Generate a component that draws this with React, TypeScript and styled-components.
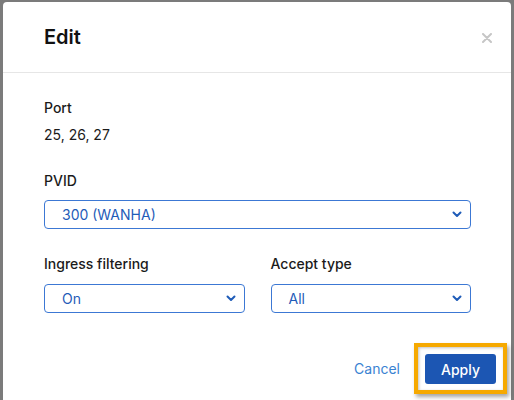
import styled, { createGlobalStyle } from "styled-components";

const GlobalStyle = createGlobalStyle`
  html, body {
    margin: 0;
    padding: 0;
    background: #7b7b7b;
    font-family: Inter, "Noto Sans", "Liberation Sans", sans-serif;
    overflow: hidden;
  }
`;

const Backdrop = styled.div`
  height: 400px;
  padding: 2px 3px 0 3px;
  box-sizing: border-box;
`;

const Modal = styled.div`
  background: #ffffff;
  border-radius: 4px 4px 0 0;
  height: 398px;
  color: #1b1b1b;
`;

const Header = styled.div`
  display: flex;
  align-items: center;
  justify-content: space-between;
  height: 70px;
  padding: 0 15px 0 41px;
  border-bottom: 1px solid #e6e6e6;
`;

const Title = styled.h2`
  margin: 0;
  font-size: 20px;
  font-weight: 600;
  color: #111111;
`;

const CloseButton = styled.button`
  border: none;
  background: none;
  padding: 4px;
  display: flex;
  cursor: pointer;
  margin-top: 1px;
`;

const Body = styled.div`
  padding: 25px 40px 0 41px;
`;

const Label = styled.div`
  font-size: 14px;
  line-height: 20px;
  font-weight: 500;
  color: #1b1b1b;
`;

const Value = styled.div`
  font-size: 14px;
  line-height: 20px;
  margin-top: 7px;
  color: #1b1b1b;
`;

const Field = styled.div<{ $top: number }>`
  margin-top: ${(p) => p.$top}px;
`;

const SelectBox = styled.div<{ $gap: number }>`
  margin-top: ${(p) => p.$gap}px;
  height: 29px;
  box-sizing: border-box;
  border: 1px solid #3c78d4;
  border-radius: 4px;
  display: flex;
  align-items: center;
  justify-content: space-between;
  padding: 0 8px 0 17px;
  font-size: 14px;
  color: #1f5cb8;
  cursor: pointer;
`;

const Row = styled.div`
  display: grid;
  grid-template-columns: 1fr 1fr;
  gap: 26px;
`;

/* the highlight box sticks out past the body padding */
const Footer = styled.div`
  display: flex;
  justify-content: flex-end;
  align-items: center;
  gap: 14px;
  margin: 30px -36px 0 0;
`;

const CancelLink = styled.button`
  border: none;
  background: none;
  padding: 0;
  font-family: inherit;
  font-size: 14px;
  color: #3a82d2;
  cursor: pointer;
`;

const Highlight = styled.div`
  border: 4px solid #f6a900;
  padding: 7px 7px 6px 7px;
  background: #ffffff;
  box-shadow: 2px 3px 4px rgba(0, 0, 0, 0.35),
    inset 1px 1px 3px rgba(0, 0, 0, 0.25);
`;

const PrimaryButton = styled.button`
  width: 71px;
  height: 30px;
  border: none;
  border-radius: 3px;
  background: #1c56b3;
  color: #ffffff;
  font-family: inherit;
  font-size: 14px;
  font-weight: 500;
  cursor: pointer;
  display: block;
`;

const Chevron = () => (
  <svg width="10" height="7" viewBox="0 0 10 7">
    <path
      d="M1.5 1.5 L5 5 L8.5 1.5"
      fill="none"
      stroke="#1f5cb8"
      strokeWidth="2"
      strokeLinecap="round"
      strokeLinejoin="round"
    />
  </svg>
);

type SelectProps = { value: string; gap: number };

const Select = ({ value, gap }: SelectProps) => (
  <SelectBox $gap={gap}>
    <span>{value}</span>
    <Chevron />
  </SelectBox>
);

const App = () => {
  return (
    <>
      <GlobalStyle />
      <Backdrop>
        <Modal>
          <Header>
            <Title>Edit</Title>
            <CloseButton aria-label="close">
              <svg width="10" height="10" viewBox="0 0 10 10">
                <path
                  d="M1 1 L9 9 M9 1 L1 9"
                  stroke="#c6c6c6"
                  strokeWidth="2"
                  strokeLinecap="round"
                />
              </svg>
            </CloseButton>
          </Header>
          <Body>
            <Label>Port</Label>
            <Value>25, 26, 27</Value>
            <Field $top={26}>
              <Label>PVID</Label>
              <Select value="300 (WANHA)" gap={9} />
            </Field>
            <Field $top={25}>
              <Row>
                <div>
                  <Label>Ingress filtering</Label>
                  <Select value="On" gap={10} />
                </div>
                <div>
                  <Label>Accept type</Label>
                  <Select value="All" gap={10} />
                </div>
              </Row>
            </Field>
            <Footer>
              <CancelLink>Cancel</CancelLink>
              <Highlight>
                <PrimaryButton>Apply</PrimaryButton>
              </Highlight>
            </Footer>
          </Body>
        </Modal>
      </Backdrop>
    </>
  );
};

export default App;
